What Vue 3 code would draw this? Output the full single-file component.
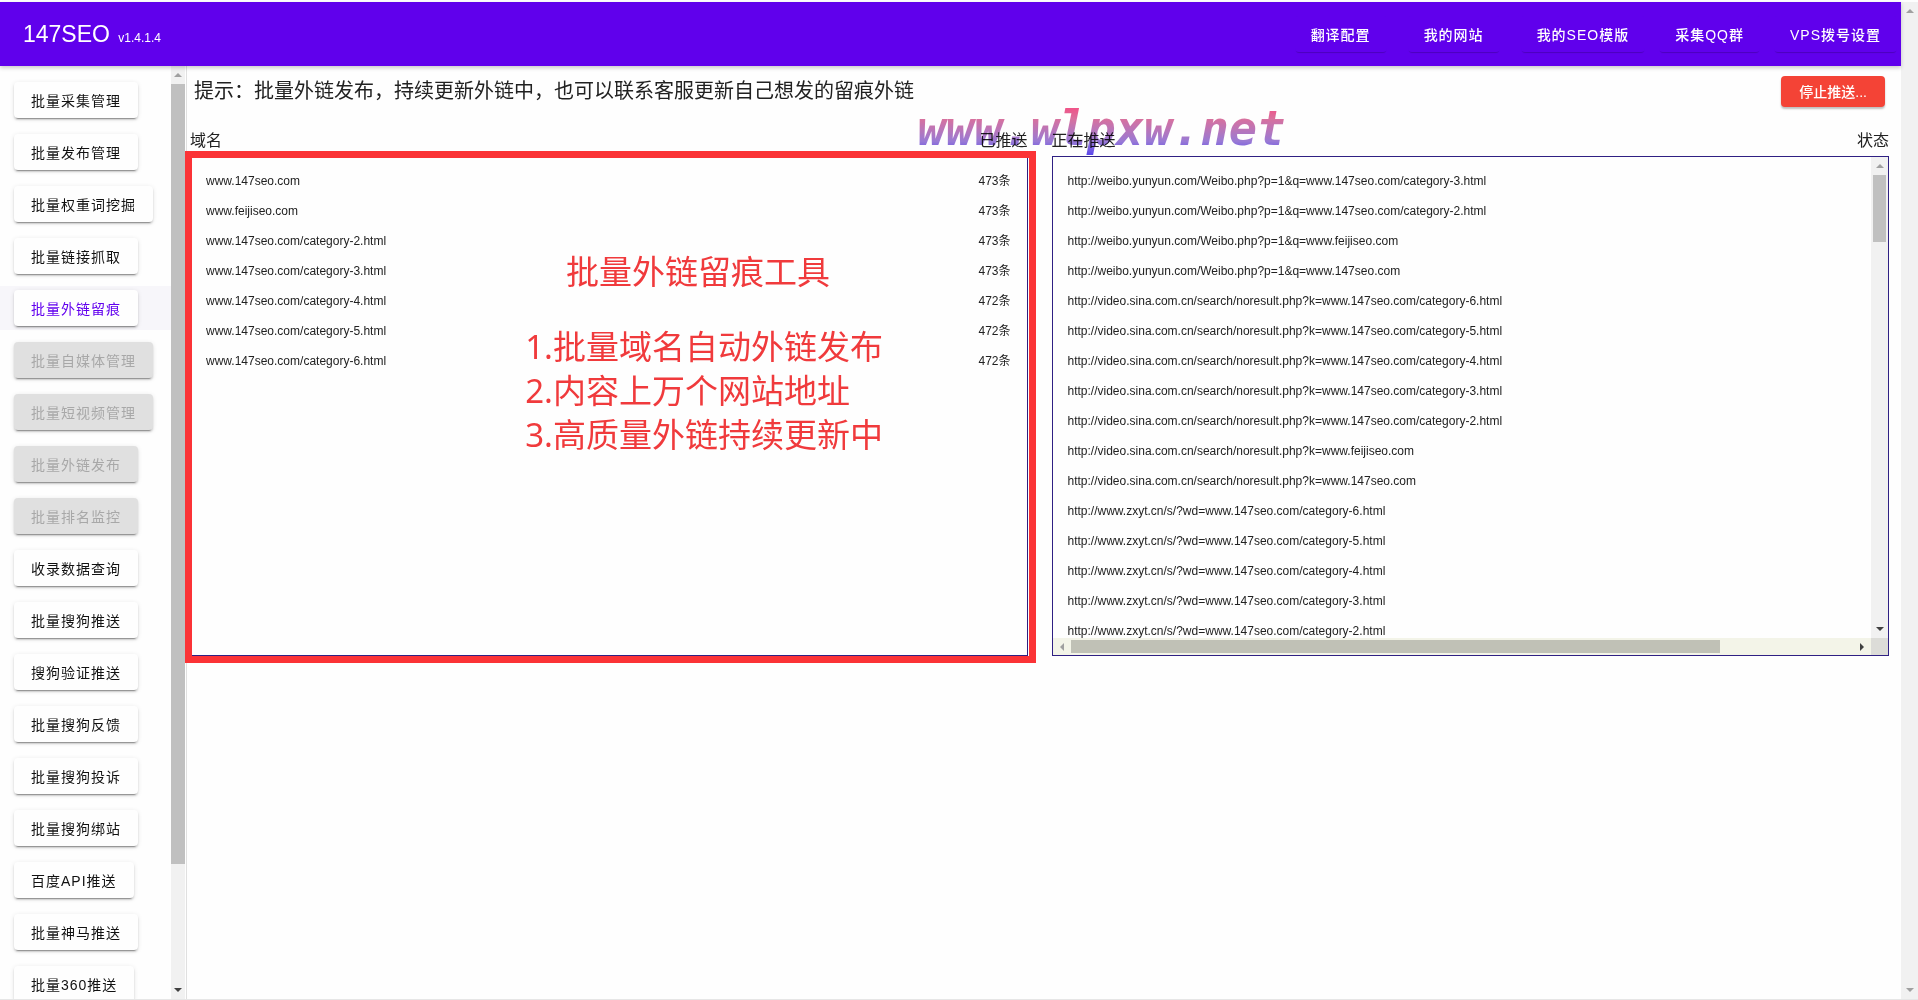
<script setup>
const navLinks = ['翻译配置', '我的网站', '我的SEO模版', '采集QQ群', 'VPS拨号设置']

const menu = [
  { label: '批量采集管理' },
  { label: '批量发布管理' },
  { label: '批量权重词挖掘' },
  { label: '批量链接抓取' },
  { label: '批量外链留痕', active: true },
  { label: '批量自媒体管理', disabled: true },
  { label: '批量短视频管理', disabled: true },
  { label: '批量外链发布', disabled: true },
  { label: '批量排名监控', disabled: true },
  { label: '收录数据查询' },
  { label: '批量搜狗推送' },
  { label: '搜狗验证推送' },
  { label: '批量搜狗反馈' },
  { label: '批量搜狗投诉' },
  { label: '批量搜狗绑站' },
  { label: '百度API推送' },
  { label: '批量神马推送' },
  { label: '批量360推送' }
]

const domains = [
  ['www.147seo.com', 473],
  ['www.feijiseo.com', 473],
  ['www.147seo.com/category-2.html', 473],
  ['www.147seo.com/category-3.html', 473],
  ['www.147seo.com/category-4.html', 472],
  ['www.147seo.com/category-5.html', 472],
  ['www.147seo.com/category-6.html', 472]
]

const weibo = 'http://weibo.yunyun.com/Weibo.php?p=1&q='
const sina = 'http://video.sina.com.cn/search/noresult.php?k='
const zxyt = 'http://www.zxyt.cn/s/?wd='
const page = (n) => `www.147seo.com/category-${n}.html`

const pushing = [
  weibo + page(3),
  weibo + page(2),
  weibo + 'www.feijiseo.com',
  weibo + 'www.147seo.com',
  ...[6, 5, 4, 3, 2].map((n) => sina + page(n)),
  sina + 'www.feijiseo.com',
  sina + 'www.147seo.com',
  ...[6, 5, 4, 3, 2].map((n) => zxyt + page(n))
]
</script>

<template>
  <div class="window">
    <div class="app">
      <header class="topbar">
        <h1 class="brand">147SEO <small>v1.4.1.4</small></h1>
        <nav class="nav">
          <button v-for="link in navLinks" :key="link" type="button" class="nav-btn">{{ link }}</button>
        </nav>
      </header>

      <div class="body">
        <aside class="sidebar">
          <ul class="menu">
            <li v-for="item in menu" :key="item.label" :class="{ active: item.active }">
              <button type="button" class="menu-btn" :disabled="item.disabled">{{ item.label }}</button>
            </li>
          </ul>
          <div class="bar side-bar">
            <svg class="arrow" viewBox="0 0 8 8"><path d="M0 6l4-4 4 4z" fill="#a0a0a0" /></svg>
            <div class="track"><div class="thumb"></div></div>
            <svg class="arrow" viewBox="0 0 8 8"><path d="M0 2l4 4 4-4z" fill="#404040" /></svg>
          </div>
        </aside>

        <main class="main">
          <div class="toolbar">
            <h2 class="hint">提示：批量外链发布，持续更新外链中，也可以联系客服更新自己想发的留痕外链</h2>
            <button type="button" class="stop">停止推送...</button>
          </div>

          <div class="columns">
            <section class="column">
              <div class="labels"><span>域名</span><span>已推送</span></div>
              <div class="panel">
                <table class="rows">
                  <tbody>
                    <tr v-for="[name, count] in domains" :key="name">
                      <td>{{ name }}</td>
                      <td class="count">{{ count }}条</td>
                    </tr>
                  </tbody>
                </table>
                <div class="frame"></div>
                <div class="note">
                  <p class="note-title">批量外链留痕工具</p>
                  <p>1.批量域名自动外链发布</p>
                  <p>2.内容上万个网站地址</p>
                  <p>3.高质量外链持续更新中</p>
                </div>
              </div>
            </section>

            <section class="column">
              <div class="labels"><span>正在推送</span><span>状态</span></div>
              <div class="panel scroller">
                <div class="view">
                  <table class="rows">
                    <tbody>
                      <tr v-for="url in pushing" :key="url">
                        <td>{{ url }}</td>
                      </tr>
                    </tbody>
                  </table>
                </div>
                <div class="bar">
                  <svg class="arrow" viewBox="0 0 8 8"><path d="M0 6l4-4 4 4z" fill="#a0a0a0" /></svg>
                  <div class="track"><div class="thumb short"></div></div>
                  <svg class="arrow" viewBox="0 0 8 8"><path d="M0 2l4 4 4-4z" fill="#404040" /></svg>
                </div>
                <div class="bar-x">
                  <svg class="arrow" viewBox="0 0 8 8"><path d="M6 0l-4 4 4 4z" fill="#a0a0a0" /></svg>
                  <div class="track-x"><div class="thumb-x"></div></div>
                  <svg class="arrow" viewBox="0 0 8 8"><path d="M2 0l4 4-4 4z" fill="#404040" /></svg>
                </div>
                <div class="corner"></div>
              </div>
            </section>

            <div class="watermark">www.wlpxw.net</div>
          </div>
        </main>
      </div>
    </div>

    <div class="bar page-bar">
      <svg class="arrow" viewBox="0 0 8 8"><path d="M0 6l4-4 4 4z" fill="#a0a0a0" /></svg>
      <div class="track"></div>
      <svg class="arrow" viewBox="0 0 8 8"><path d="M0 2l4 4 4-4z" fill="#a0a0a0" /></svg>
    </div>
  </div>
</template>

<style>
body {
  margin: 0;
  background: #fefefe;
}
</style>

<style scoped>
* {
  box-sizing: border-box;
}

.window {
  display: flex;
  height: 100vh;
  padding-top: 2px;
  border-bottom: 1px solid #e6e6e6;
  overflow: hidden;
  font-family: "Liberation Sans", "Noto Sans CJK SC", sans-serif;
  color: #212121;
}

.app {
  flex: 1;
  min-width: 0;
  display: flex;
  flex-direction: column;
}

.topbar {
  flex: none;
  display: flex;
  align-items: center;
  justify-content: space-between;
  height: 64px;
  padding: 0 4px 0 23px;
  background: #6000ec;
  color: #fff;
  box-shadow: 0 2px 4px rgba(0, 0, 0, 0.2);
  position: relative;
  z-index: 1;
}

.brand {
  margin: 0;
  font-size: 23px;
  font-weight: 400;
}

.brand small {
  margin-left: 2px;
  font-size: 12px;
}

.nav {
  display: flex;
  gap: 14px;
}

.nav-btn {
  height: 36px;
  padding: 0 16px;
  border: 0;
  border-radius: 4px;
  background: #6000ec;
  color: #fff;
  font-family: inherit;
  font-size: 14px;
  font-weight: 500;
  letter-spacing: 1px;
  box-shadow: 0 2px 1px -1px rgba(0, 0, 0, 0.2);
}

.nav-btn:nth-child(-n + 2) {
  margin-right: 7px;
}

.body {
  flex: 1;
  min-height: 0;
  display: flex;
}

.sidebar {
  flex: none;
  display: flex;
  width: 187px;
  padding-right: 1px;
  border-right: 1px solid #e0e0e0;
}

.menu {
  flex: 1;
  margin: 0;
  padding: 12px 0 0;
  list-style: none;
  overflow: hidden;
}

.menu li {
  height: 44px;
  margin-bottom: 8px;
  padding: 4px 14px;
}

.menu li.active {
  background: #f7f6fa;
}

.menu-btn {
  height: 36px;
  padding: 0 17px;
  border: 0;
  border-radius: 4px;
  background: #fefefe;
  color: #111;
  font-family: inherit;
  font-size: 14px;
  letter-spacing: 1px;
  white-space: nowrap;
  box-shadow: 0 3px 1px -2px rgba(0, 0, 0, 0.3), 0 2px 2px rgba(0, 0, 0, 0.14), 0 1px 5px rgba(0, 0, 0, 0.1);
}

.active .menu-btn {
  color: #6200ee;
}

.menu-btn:disabled {
  background: #e0e0e0;
  color: #a8a8a8;
}

.bar {
  display: flex;
  flex-direction: column;
  align-items: center;
  width: 17px;
  background: #f1f1f1;
}

.side-bar {
  width: 14px;
}

.arrow {
  flex: none;
  width: 8px;
  height: 8px;
  margin: 5px;
}

.track {
  flex: 1;
  width: 100%;
}

.thumb {
  width: 100%;
  height: 87%;
  background: #c0c0c0;
}

.thumb.short {
  height: 15%;
  width: 13px;
  margin: 0 auto;
}

.main {
  flex: 1;
  min-width: 0;
  padding: 9px 12px 0 3px;
}

.toolbar {
  display: flex;
  align-items: center;
  justify-content: space-between;
  height: 32px;
  margin-bottom: 22px;
  padding: 0 4px;
}

.hint {
  margin: 0;
  font-size: 20px;
  font-weight: 400;
  line-height: 32px;
}

.stop {
  height: 31px;
  padding: 0 18px;
  border: 0;
  border-radius: 4px;
  background: #f44336;
  color: #fff;
  font-family: inherit;
  font-size: 14px;
  font-weight: 500;
  box-shadow: 0 2px 2px rgba(0, 0, 0, 0.25);
}

.columns {
  display: flex;
  gap: 24px;
  position: relative;
}

.column {
  flex: 1;
  min-width: 0;
}

.labels {
  display: flex;
  justify-content: space-between;
  height: 24px;
  margin-bottom: 3px;
  font-size: 16px;
  line-height: 24px;
}

.panel {
  position: relative;
  height: 50vh;
  padding: 9px 16px 0 15px;
  border: 1px solid #2f2083;
}

.rows {
  width: 100%;
  border-collapse: collapse;
  font-size: 12px;
}

.rows td {
  height: 30px;
  padding: 0;
  line-height: 30px;
  vertical-align: baseline;
  white-space: nowrap;
}

.rows .count {
  text-align: right;
}

.frame {
  position: absolute;
  inset: -6px -9px -8px -6px;
  border: 7px solid #fb3336;
}

.note {
  position: absolute;
  top: 93px;
  left: 40%;
  color: #f03a3c;
  font-family: "Noto Sans", "Noto Sans CJK SC", sans-serif;
  font-size: 33px;
  line-height: 44px;
  white-space: nowrap;
}

.note p {
  margin: 0;
}

.note .note-title {
  margin-bottom: 31px;
  padding-right: 12px;
  text-align: center;
}

.scroller {
  display: grid;
  grid-template-columns: 1fr 17px;
  grid-template-rows: 1fr 17px;
  padding: 0;
}

.view {
  min-width: 0;
  min-height: 0;
  padding: 9px 0 0 15px;
  overflow: hidden;
}

.bar-x {
  display: flex;
  align-items: center;
  background: #f3f4e8;
}

.track-x {
  flex: 1;
  height: 13px;
}

.thumb-x {
  width: 83%;
  height: 100%;
  background: #c0c1b6;
}

.corner {
  background: #dcdcd8;
}

.watermark {
  position: absolute;
  top: -28px;
  left: 43%;
  margin-left: -3px;
  font-family: "DejaVu Sans Mono", monospace;
  font-size: 47px;
  font-style: italic;
  font-weight: 700;
  line-height: 56px;
  color: transparent;
  background: linear-gradient(#f0558a 14%, #d9719f 32%, #9a7ad6 72%, #4f3df0 100%);
  background-clip: text;
  mix-blend-mode: multiply;
}
</style>
